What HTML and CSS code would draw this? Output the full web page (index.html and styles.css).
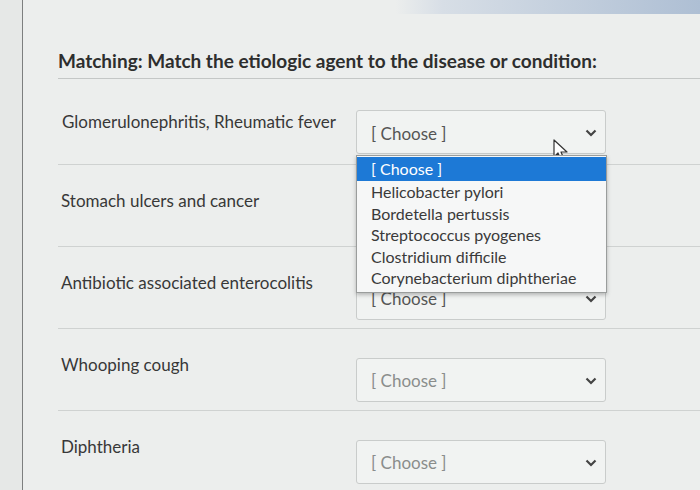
FILE: index.html
```html
<!DOCTYPE html>
<html lang="en">
<head>
  <meta charset="UTF-8" />
  <title>Matching</title>
  <link rel="stylesheet" href="styles.css">
</head>
<body>
  <div class="page">
    <div class="gutter"></div>

    <div class="quiz">
      <div class="topbar"></div>
      <h1 class="title">Matching: Match the etiologic agent to the disease or condition:</h1>

      <!-- Row 1, with the dropdown opened -->
      <div class="row row-first">
        <div class="label">Glomerulonephritis, Rheumatic fever</div>
        <div class="select open">
          <span class="value">[ Choose ]</span>
          <svg class="chev" width="12" height="8" viewBox="0 0 12 8"><path d="M1.5 1.5 L6 6 L10.5 1.5" fill="none" stroke="#444" stroke-width="2.2"/></svg>
          <svg class="cursor" width="18" height="24" viewBox="0 0 18 24"><path d="M1 1 L1 18 L5 14 L8 21 L11 20 L8 13 L14 13 Z" fill="#fff" stroke="#333" stroke-width="1.2" stroke-linejoin="round"/></svg>
          <ul class="options">
            <li class="selected">[ Choose ]</li>
            <li>Helicobacter pylori</li>
            <li>Bordetella pertussis</li>
            <li>Streptococcus pyogenes</li>
            <li>Clostridium difficile</li>
            <li>Corynebacterium diphtheriae</li>
          </ul>
        </div>
      </div>

      <div class="row">
        <div class="label">Stomach ulcers and cancer</div>
        <div class="select">
          <span class="value">[ Choose ]</span>
          <svg class="chev" width="12" height="8" viewBox="0 0 12 8"><path d="M1.5 1.5 L6 6 L10.5 1.5" fill="none" stroke="#444" stroke-width="2.2"/></svg>
        </div>
      </div>

      <div class="row">
        <div class="label">Antibiotic associated enterocolitis</div>
        <div class="select">
          <span class="value">[ Choose ]</span>
          <svg class="chev" width="12" height="8" viewBox="0 0 12 8"><path d="M1.5 1.5 L6 6 L10.5 1.5" fill="none" stroke="#444" stroke-width="2.2"/></svg>
        </div>
      </div>

      <div class="row">
        <div class="label">Whooping cough</div>
        <div class="select faded">
          <span class="value">[ Choose ]</span>
          <svg class="chev" width="12" height="8" viewBox="0 0 12 8"><path d="M1.5 1.5 L6 6 L10.5 1.5" fill="none" stroke="#444" stroke-width="2.2"/></svg>
        </div>
      </div>

      <div class="row row-last">
        <div class="label">Diphtheria</div>
        <div class="select faded">
          <span class="value">[ Choose ]</span>
          <svg class="chev" width="12" height="8" viewBox="0 0 12 8"><path d="M1.5 1.5 L6 6 L10.5 1.5" fill="none" stroke="#444" stroke-width="2.2"/></svg>
        </div>
      </div>
    </div>
  </div>
</body>
</html>
```

FILE: styles.css
```css
body {
  margin: 0;
  background: #eceeed;
  font-family: Lato, "Open Sans", sans-serif;
  color: #333;
  overflow: hidden;
}

.page {
  display: flex;
  height: 490px;
}

/* Left strip of the course window */
.gutter {
  width: 22px;
  flex-shrink: 0;
  background: #e6e8e7;
  border-right: 1px solid #7d7f7f;
}

.quiz {
  flex: 1;
  padding-left: 35px;
}

.topbar {
  height: 14px;
  margin-left: -35px;
  background: linear-gradient(to right, transparent 55%, #d7dee6 62%, #aebfd4 100%);
}

.title {
  margin: 0;
  padding-top: 36px;
  padding-bottom: 6px;
  font-size: 19px;
  font-weight: 700;
  line-height: 22px;
  color: #2e2e2e;
  border-bottom: 1px solid #c4c7c6;
}

/* Question rows */
.row {
  display: flex;
  align-items: flex-start;
  height: 82px;
  box-sizing: border-box;
  border-bottom: 1px solid #cfd2d1;
}

.row-first { height: 86px; }
.row-first .label { margin-top: 33px; padding-left: 4px; }
.row-first .select { margin-top: 31px; }

.row-last { border-bottom: none; }

.label {
  width: 295px;
  margin-top: 26px;
  padding-left: 3px;
  font-size: 17px;
  line-height: 20px;
  color: #383838;
}

.row-first .label { width: 294px; }

.select {
  position: relative;
  display: flex;
  align-items: center;
  justify-content: space-between;
  width: 250px;
  height: 44px;
  margin-top: 29px;
  padding: 0 8px 0 14px;
  box-sizing: border-box;
  background: #f1f3f2;
  border: 1px solid #c9cccb;
  border-radius: 3px;
}

.value {
  font-size: 17px;
  color: #555;
}

.faded .value { color: #8a8d8c; }

.chev { margin-top: 2px; }

.cursor {
  position: absolute;
  left: 196px;
  top: 28px;
}

.select.open .value { margin-top: 3px; }

/* Opened option list */
.options {
  position: absolute;
  top: 44px;
  left: -1px;
  width: 249px;
  margin: 0;
  padding: 1px 0 3px;
  list-style: none;
  background: #f6f7f7;
  border: 1px solid #9a9d9c;
  box-shadow: 0 2px 4px rgba(0, 0, 0, 0.25);
  z-index: 5;
}

.options li {
  padding-left: 14px;
  font-size: 16px;
  line-height: 21.5px;
  color: #3a3a3a;
}

.options li.selected {
  background: #1d79d6;
  color: #fff;
  line-height: 24px;
}
```
